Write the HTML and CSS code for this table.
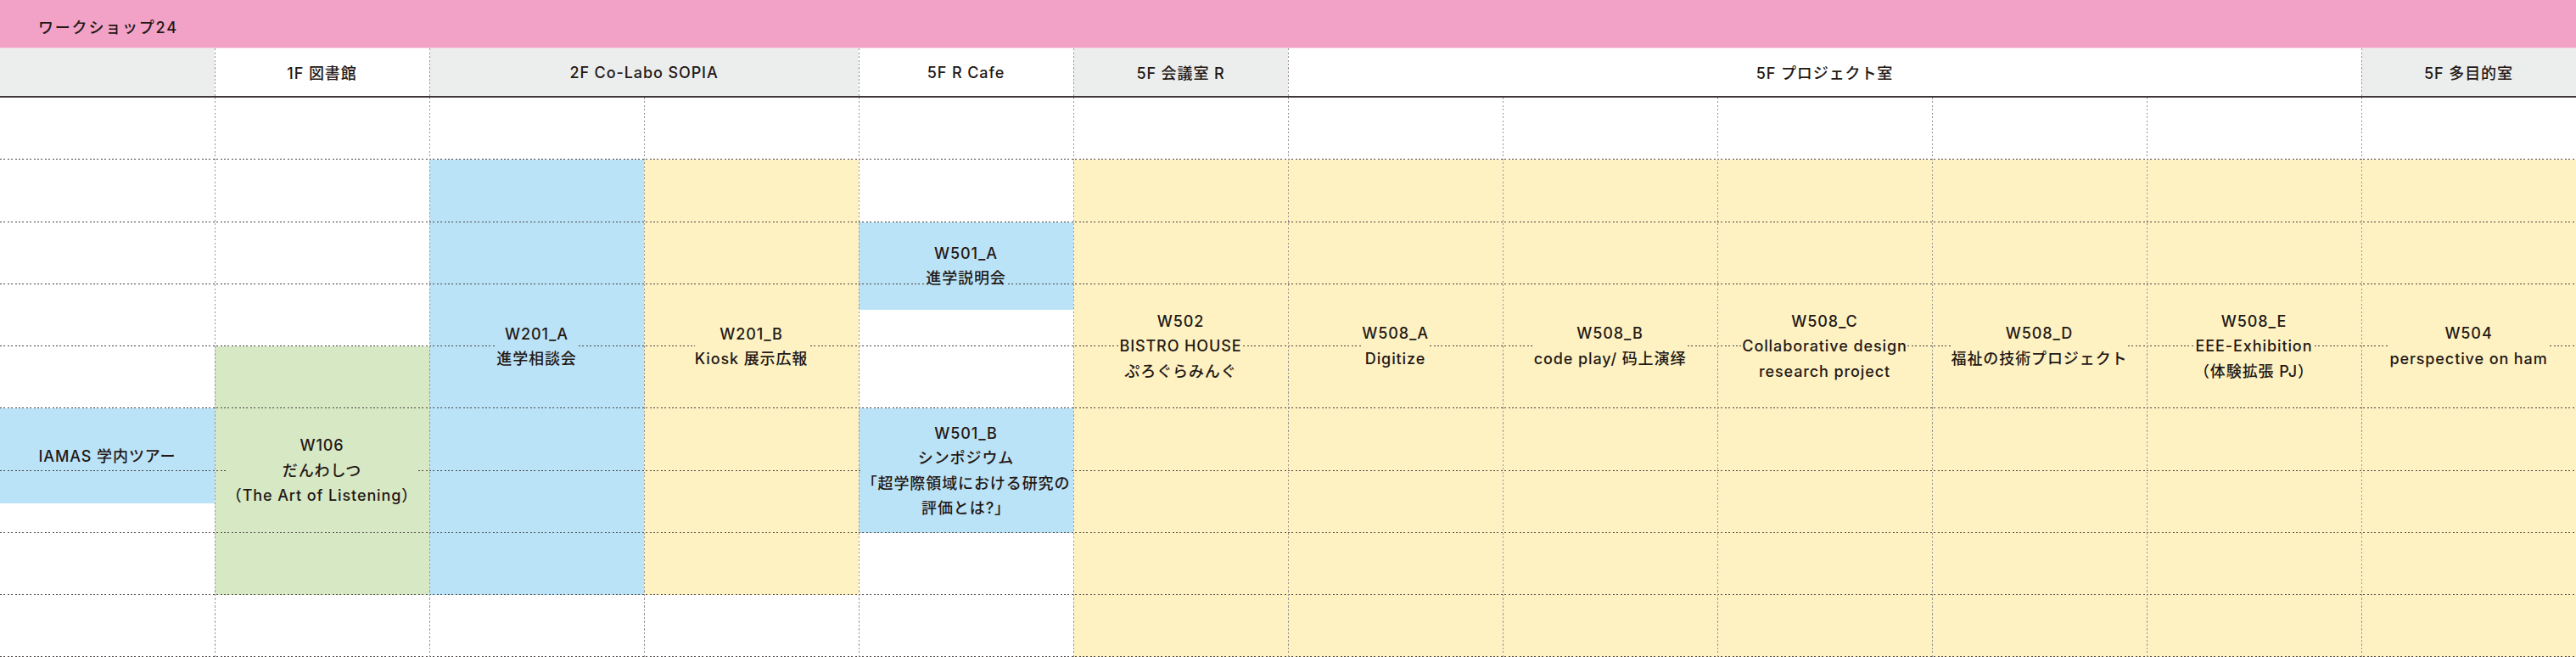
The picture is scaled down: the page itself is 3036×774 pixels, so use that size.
FILE: index.html
```html
<!DOCTYPE html>
<html lang="ja">
<head>
    <meta charset="UTF-8">
    <meta name="viewport" content="width=device-width, initial-scale=1.0">
    <title>ワークショップ24</title>
    <link rel="stylesheet" href="styles.css">
</head>
<body>
    <div class="title-bar">ワークショップ24</div>

    <div class="rooms">
        <div class="room room-gray"></div>
        <div class="room">1F 図書館</div>
        <div class="room room-gray span-2">2F Co-Labo SOPIA</div>
        <div class="room">5F R Cafe</div>
        <div class="room room-gray">5F 会議室 R</div>
        <div class="room span-5">5F プロジェクト室</div>
        <div class="room room-gray">5F 多目的室</div>
    </div>

    <div class="timetable">
        <div class="rules rules-rows">
            <div></div><div></div><div></div><div></div><div></div>
            <div></div><div></div><div></div><div></div>
        </div>
        <div class="rules rules-cols">
            <div></div><div></div><div></div><div></div><div></div><div></div>
            <div></div><div></div><div></div><div></div><div></div><div></div>
        </div>

        <div class="event blue ev-tour"><div class="label">IAMAS 学内ツアー</div></div>
        <div class="event green ev-w106"><div class="label">W106<br>だんわしつ<br>（The Art of Listening）</div></div>
        <div class="event blue ev-w201a shift-1"><div class="label">W201_A<br>進学相談会</div></div>
        <div class="event yellow ev-w201b shift-1"><div class="label">W201_B<br>Kiosk 展示広報</div></div>
        <div class="event blue ev-w501a"><div class="label">W501_A<br>進学説明会</div></div>
        <div class="event blue ev-w501b"><div class="label">W501_B<br>シンポジウム<br>「超学際領域における研究の<br>評価とは?」</div></div>
        <div class="event yellow ev-long col-6 shift-2"><div class="label">W502<br>BISTRO HOUSE<br>ぷろぐらみんぐ</div></div>
        <div class="event yellow ev-long col-7 shift-2"><div class="label">W508_A<br>Digitize</div></div>
        <div class="event yellow ev-long col-8 shift-2"><div class="label">W508_B<br>code play/ 码上演绎</div></div>
        <div class="event yellow ev-long col-9 shift-2"><div class="label">W508_C<br>Collaborative design<br>research project</div></div>
        <div class="event yellow ev-long col-10 shift-2"><div class="label">W508_D<br>福祉の技術プロジェクト</div></div>
        <div class="event yellow ev-long col-11 shift-2"><div class="label">W508_E<br>EEE-Exhibition<br>（体験拡張 PJ）</div></div>
        <div class="event yellow ev-long col-12 shift-2"><div class="label">W504<br>perspective on ham</div></div>
    </div>
</body>
</html>
```

FILE: styles.css
```css
body {
    margin: 0;
    overflow: hidden;
    font-family: Inter, "Noto Sans CJK JP", "Noto Sans CJK SC", sans-serif;
    font-weight: 500;
    font-size: 18px;
    letter-spacing: 0.05em;
    color: #231815;
    background-color: #fff;
}
.title-bar {
    box-sizing: border-box;
    height: 57px;
    padding: 5px 0 0 45px;
    display: flex;
    align-items: center;
    background-color: #f2a2c6;
    border-bottom: 1px solid #f8d3e3;
    letter-spacing: 0.1em;
}
.rooms {
    display: grid;
    grid-template-columns: repeat(12, 253px);
    height: 56px;
    border-bottom: 2px solid #3e3938;
}
.room {
    display: flex;
    align-items: center;
    justify-content: center;
    background-color: #fff;
}
.room + .room {
    background-image: repeating-linear-gradient(180deg, #9a9695 0 2px, transparent 2px 4.5px);
    background-size: 1px 100%;
    background-repeat: no-repeat;
}
.room-gray {
    background-color: #eceeed;
}
.span-2 {
    grid-column: span 2;
}
.span-5 {
    grid-column: span 5;
}

/* time grid */
.timetable {
    display: grid;
    grid-template-columns: repeat(12, 253px);
    grid-template-rows: repeat(9, 73.25px);
}
.rules {
    grid-area: 1 / 1 / -1 / -1;
    display: grid;
    z-index: 1;
    pointer-events: none;
}
.rules-rows {
    grid-template-rows: repeat(9, 73.25px);
}
.rules-rows div {
    background-image: repeating-linear-gradient(90deg, #4a4443 0 2px, transparent 2px 4.4px);
    background-size: 100% 1px;
    background-position: left bottom;
    background-repeat: no-repeat;
}
.rules-cols {
    grid-template-columns: repeat(12, 253px);
}
.rules-cols div + div {
    background-image: repeating-linear-gradient(180deg, #9a9695 0 2px, transparent 2px 4.5px);
    background-size: 1px 100%;
    background-repeat: no-repeat;
}

.event {
    box-sizing: border-box;
    display: flex;
    align-items: center;
    justify-content: center;
}
.label {
    position: relative;
    z-index: 2;
    background: inherit;
    text-align: center;
    line-height: 29.5px;
    white-space: nowrap;
}
.blue {
    background-color: #bbe3f7;
}
.yellow {
    background-color: #fef2c3;
}
.green {
    background-color: #d7e8c5;
}
.shift-1 {
    padding-bottom: 73px;
}
.shift-2 {
    padding-bottom: 147px;
}

.ev-tour {
    grid-column: 1;
    grid-row: 6 / span 2;
    align-self: start;
    height: 112px;
}
.ev-w106 {
    grid-column: 2;
    grid-row: 5 / span 4;
}
.ev-w201a {
    grid-column: 3;
    grid-row: 2 / span 7;
}
.ev-w201b {
    grid-column: 4;
    grid-row: 2 / span 7;
}
.ev-w501a {
    grid-column: 5;
    grid-row: 3 / span 2;
    align-self: start;
    height: 103px;
}
.ev-w501b {
    grid-column: 5;
    grid-row: 6 / span 2;
}
.ev-long {
    grid-row: 2 / span 8;
}
.col-6 { grid-column: 6; }
.col-7 { grid-column: 7; }
.col-8 { grid-column: 8; }
.col-9 { grid-column: 9; }
.col-10 { grid-column: 10; }
.col-11 { grid-column: 11; }
.col-12 { grid-column: 12; }
```
